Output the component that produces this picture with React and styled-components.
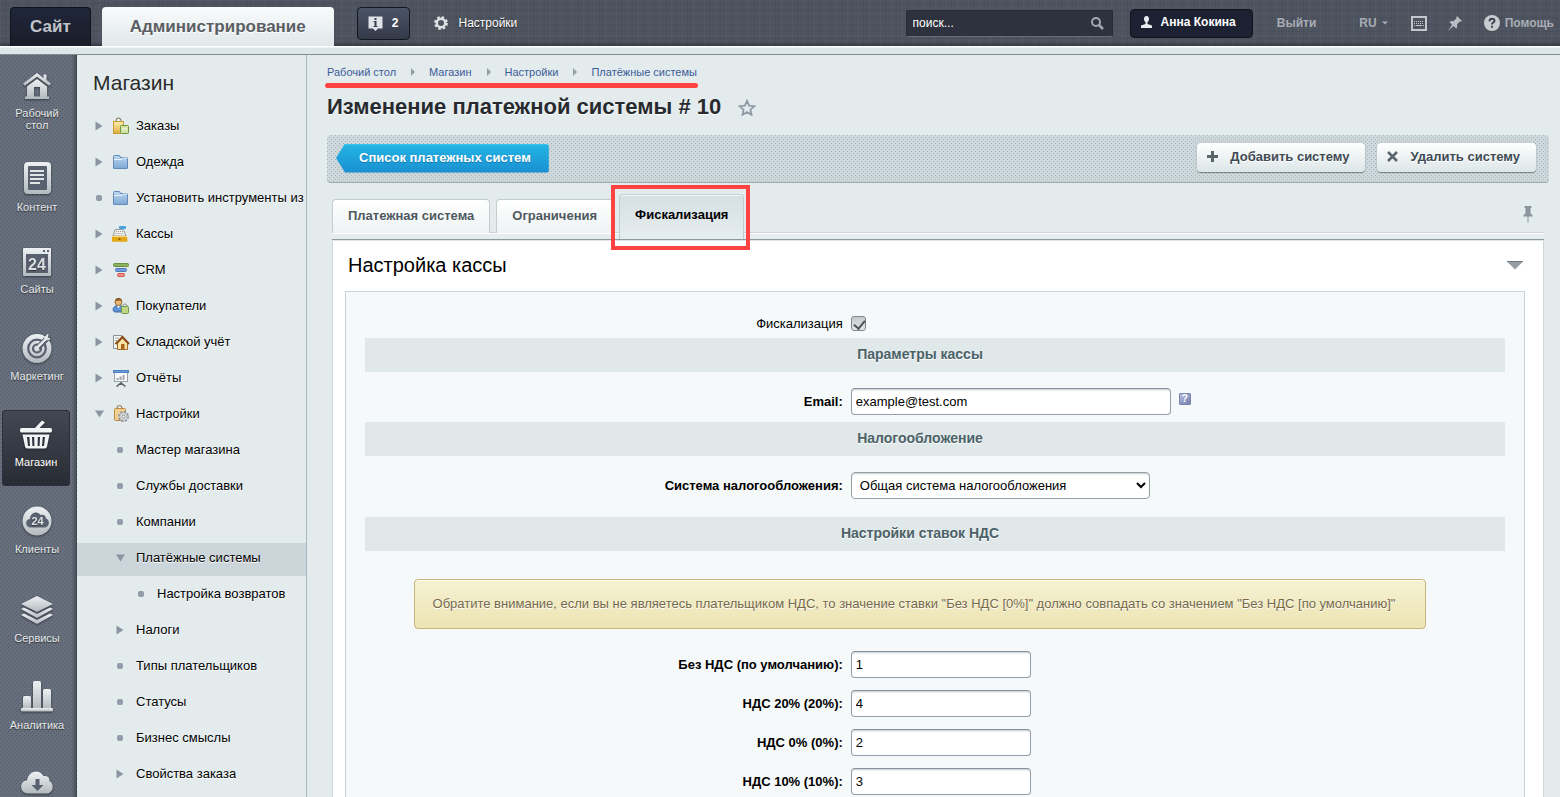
import React, { useState } from "react";
import styled, { createGlobalStyle, css } from "styled-components";

const GlobalStyle = createGlobalStyle`
	* {
		box-sizing: border-box;
	}
	body {
		margin: 0;
		background: #e3ebed;
		font-family: "Liberation Sans", Arial, sans-serif;
		font-size: 13px;
		color: #000;
	}
	button,
	input,
	select {
		font-family: inherit;
		font-size: 13px;
	}
	button {
		cursor: pointer;
	}
	a {
		color: inherit;
		text-decoration: none;
	}
	ul {
		list-style: none;
		margin: 0;
		padding: 0;
	}
`;

// staggered one-pixel dots over a plain colour
const dots = (dot, base) => `
	conic-gradient(at 1px 1px, transparent 75%, ${dot} 0) 0 0 / 4px 4px,
	conic-gradient(at 1px 1px, transparent 75%, ${dot} 0) 2px 2px / 4px 4px,
	${base}
`;

const Page = styled.div`
	display: flex;
	flex-direction: column;
	height: 100vh;
`;

/* header */

const Header = styled.header`
	flex: none;
	display: flex;
	align-items: center;
	height: 55px;
	padding: 0 6px 9px 10px;
	color: #fff;
	background:
		linear-gradient(#83898f, #83898f) bottom / 100% 1px no-repeat,
		linear-gradient(#fff 1px, #dde7e9 2px, #dde7e9) 0 46px / 100% 8px no-repeat,
		linear-gradient(rgba(30, 36, 44, 0), rgba(30, 36, 44, 0.5)) 0 41px / 100% 5px no-repeat,
		repeating-linear-gradient(90deg, rgba(255, 255, 255, 0.03) 0 1px, transparent 1px 5px, rgba(0, 0, 0, 0.05) 5px 6px, transparent 6px 11px),
		repeating-linear-gradient(rgba(255, 255, 255, 0.02) 0 1px, transparent 1px 3px, rgba(0, 0, 0, 0.05) 3px 4px, transparent 4px 7px),
		#4d545f;
`;

const HeaderTab = styled.a`
	align-self: flex-end;
	display: flex;
	align-items: center;
	height: 39px;
	font-size: 17px;
	font-weight: bold;
	border-radius: 4px 4px 0 0;
	${(props) =>
		props.$active
			? css`
					padding: 0 28px;
					margin-left: 11px;
					color: #5b5e63;
					background: linear-gradient(#f9fbfb, #dfe8ea);
					text-shadow: 0 1px 0 #fff;
			  `
			: css`
					padding: 0 19px;
					color: #c0c4cb;
					border: 1px solid #10131a;
					border-bottom: none;
					background: linear-gradient(#20263a, #191d29);
			  `}
`;

const NoticeButton = styled.button`
	display: flex;
	align-items: center;
	gap: 9px;
	height: 33px;
	margin-left: 23px;
	padding: 0 11px 0 10px;
	border: 1px solid #14171e;
	border-radius: 4px;
	background: linear-gradient(#4b5468, #343a49);
	color: #fff;
	font-size: 12px;
	font-weight: bold;
`;

const SettingsLink = styled.a`
	display: flex;
	align-items: center;
	gap: 10px;
	margin-left: 24px;
	font-size: 12px;
	text-shadow: 0 1px 1px #222;
`;

const Search = styled.form`
	display: flex;
	align-items: center;
	width: 207px;
	height: 27px;
	margin-left: auto;
	padding: 0 8px 0 6px;
	background: #2e323e;
	border: 1px solid #262a33;
	border-bottom-color: #666c78;
	border-radius: 2px;
`;

const SearchInput = styled.input`
	flex: 1;
	min-width: 0;
	padding: 0;
	border: none;
	outline: none;
	background: none;
	color: #fff;
	font-size: 12px;
	&::placeholder {
		color: #fff;
		opacity: 1;
	}
`;

const IconButton = styled.button`
	display: flex;
	padding: 0;
	border: none;
	background: none;
`;

const UserButton = styled.a`
	display: flex;
	align-items: center;
	gap: 9px;
	height: 29px;
	margin-left: 17px;
	padding: 0 16px 2px 10px;
	border: 1px solid #10131a;
	border-radius: 4px;
	background: linear-gradient(#1b2130, #1c2232);
	font-size: 12px;
	font-weight: bold;
`;

const HeaderLink = styled.a`
	display: flex;
	align-items: center;
	gap: 5px;
	margin-left: ${(props) => props.$gap}px;
	color: #a9adb5;
	font-size: 12px;
	font-weight: bold;
`;

/* left bar */

const Body = styled.div`
	flex: 1;
	min-height: 0;
	display: flex;
`;

const SideBar = styled.nav`
	flex: none;
	width: 77px;
	padding: 6px 0 0 2px;
	overflow: hidden;
	background:
		linear-gradient(90deg, transparent, rgba(30, 34, 42, 0.5)) right / 5px 100% no-repeat,
		${dots("#525967", "#676e7c")};
`;

const SideItem = styled.a`
	display: flex;
	flex-direction: column;
	align-items: center;
	width: 70px;
	padding-bottom: 17px;
	margin-bottom: 10px;
	color: #e4e9ec;
	font-size: 11px;
	line-height: 12px;
	text-align: center;
	text-shadow: 0 1px 1px #333;
	border-radius: 4px;
	${(props) =>
		props.$active &&
		css`
			width: 68px;
			color: #fff;
			background: linear-gradient(#434854, #282c34);
			box-shadow: inset 0 0 0 1px #2b2f38;
		`}
`;

const SideIcon = styled.span`
	display: flex;
	align-items: flex-end;
	height: ${(props) => props.$height}px;
	margin-bottom: 7px;
	filter: drop-shadow(0 1px 1px rgba(20, 24, 32, 0.6));
`;

const SideLabel = styled.span`
	max-width: 60px;
	padding-bottom: 1px;
`;

/* tree menu */

const Menu = styled.nav`
	flex: none;
	width: 230px;
	overflow: hidden;
	border-right: 1px solid #a3b6c4;
	background: #e3ebed;
`;

const MenuTitle = styled.h2`
	margin: 15px 0 15px 16px;
	font-size: 21px;
	line-height: 26px;
	font-weight: normal;
	color: #2b2b2b;
`;

const MenuRow = styled.li`
	display: flex;
	align-items: center;
	height: 33px;
	margin-bottom: 3px;
	padding: 0 0 4px ${(props) => 16 + props.$level * 21}px;
	background: ${(props) => (props.$selected ? "#cbd5da" : "none")};
`;

const Toggle = styled.button`
	flex: none;
	display: flex;
	align-items: center;
	justify-content: center;
	width: 12px;
	height: 12px;
	padding: 0;
	border: none;
	background: none;
`;

const Bullet = styled.span`
	flex: none;
	width: 6px;
	height: 6px;
	margin: 0 3px;
	border-radius: 2px;
	background: #929da9;
`;

const MenuLink = styled.a`
	display: flex;
	align-items: center;
	gap: 6px;
	min-width: 0;
	overflow: hidden;
	margin-left: ${(props) => (props.$icon ? 7 : 10)}px;
	white-space: nowrap;
	line-height: 20px;
	text-shadow: 0 1px 0 #fff;
	svg {
		flex: none;
	}
`;

/* content */

const Main = styled.main`
	flex: 1;
	min-width: 0;
	overflow: hidden;
	padding: 11px 11px 0 20px;
`;

const Breadcrumbs = styled.nav`
	position: relative;
	display: flex;
	align-items: center;
	width: fit-content;
	height: 13px;
	padding-bottom: 2px;
	color: #3d5c99;
	font-size: 11px;
	&::after {
		content: "";
		position: absolute;
		left: -2px;
		right: -1px;
		top: 17px;
		height: 5px;
		border-radius: 3px;
		background: #ff4343;
	}
`;

const CrumbArrow = styled.span`
	margin: 0 14px 0 15px;
	border-left: 4px solid #929da5;
	border-top: 4px solid transparent;
	border-bottom: 4px solid transparent;
`;

const TitleRow = styled.div`
	display: flex;
	align-items: center;
	gap: 17px;
	height: 28px;
	margin: 14px 0;
`;

const Title = styled.h1`
	margin: 0;
	font-size: 22px;
	color: #272b30;
	text-shadow: 0 1px 0 #fff;
`;

const Toolbar = styled.div`
	display: flex;
	align-items: center;
	gap: 12px;
	height: 48px;
	padding: 0 13px 1px 9px;
	border-radius: 4px;
	border-bottom: 1px solid #9fabae;
	background: ${dots("#aab7bd", "#cdd8dc")};
`;

const BackButton = styled.a`
	height: 29px;
	margin-right: auto;
	padding: 0 18px 0 23px;
	line-height: 28px;
	font-weight: bold;
	color: #fff;
	text-shadow: 0 1px 0 #1779ac;
	border-radius: 3px;
	background: linear-gradient(#3bc5ee 0, #23b2e2 2px, #1a92d3 27px, #1580bb);
	clip-path: polygon(0 50%, 9px 0, 100% 0, 100% 100%, 9px 100%);
`;

const ToolButton = styled.button`
	display: flex;
	align-items: center;
	gap: 12px;
	height: 29px;
	margin-bottom: 1px;
	padding: 0 16px 2px 10px;
	border: none;
	border-radius: 4px;
	background: linear-gradient(#fff, #dce6e8);
	box-shadow: 0 1px 1px #6f7c80, 0 0 1px #8d9a9f;
	color: #3f4b54;
	font-weight: bold;
	text-shadow: 0 1px 0 #fff;
`;

const Tabs = styled.div`
	display: flex;
	align-items: flex-end;
	gap: 6px;
	height: 57px;
	margin: 0 5px;
	padding-bottom: 6px;
	border-bottom: 1px solid #8d9a9c;
	background: linear-gradient(#c9d2d5 1px, #fff 1px, #fff 2px, #e6edf0 2px) 0 100% / 100% 7px no-repeat;
`;

const Tab = styled.button`
	height: 34px;
	padding: 0 15px 2px;
	border: 1px solid #c3cdd0;
	border-bottom: none;
	border-radius: 4px 4px 0 0;
	background: linear-gradient(#fff, #eef3f4);
	color: #4f5960;
	font-weight: bold;
	${(props) =>
		props.$active &&
		css`
			position: relative;
			height: 45px;
			margin-bottom: -6px;
			padding-bottom: 5px;
			background: linear-gradient(#d5dfe1, #e6edf0);
			box-shadow: inset 0 1px 0 #f4f8f8;
			color: #000;
			&::after {
				content: "";
				position: absolute;
				inset: -10px -7px -11px -9px;
				border: 4px solid #ff4343;
			}
		`}
`;

const PinButton = styled(IconButton)`
	margin: 0 11px 10px auto;
`;

const Panel = styled.section`
	min-height: 100vh;
	margin: 0 5px;
	padding: 0 18px 18px 12px;
	border: 1px solid #ced8db;
	border-top-color: #dfe6e8;
	background: #fff;
`;

const PanelHead = styled.div`
	display: flex;
	align-items: center;
	justify-content: space-between;
	height: 50px;
	padding: 0 2px 2px 3px;
`;

const PanelTitle = styled.h2`
	margin: 0;
	font-size: 20px;
	font-weight: normal;
`;

const Form = styled.form`
	padding: 19px;
	border: 1px solid #c8d4d8;
	background: #f5f9f9;
`;

const Band = styled.h3`
	display: flex;
	align-items: center;
	justify-content: center;
	height: 34px;
	margin: ${(props) => (props.$spaced ? 11 : 0)}px 0 11px;
	padding: 0 70px 2px 40px;
	background: #e0e8ea;
	color: #4b6267;
	font-size: 14px;
	text-shadow: 0 1px 0 #fff;
`;

const Row = styled.div`
	display: flex;
	align-items: center;
	padding: 5px 0 7px;
`;

const Label = styled.label`
	width: 42%;
	padding-right: 1px;
	text-align: right;
	font-weight: ${(props) => (props.$plain ? "normal" : "bold")};
`;

const Field = styled.div`
	flex: 1;
	display: flex;
	align-items: center;
	gap: 8px;
	padding-left: 7px;
`;

const TextInput = styled.input`
	width: ${(props) => (props.$wide ? 320 : 180)}px;
	height: 27px;
	padding: 0 4px;
	border: 1px solid #959ca8;
	border-top-color: #87919c;
	border-radius: 4px;
	background: #fff;
	box-shadow: inset 0 2px 2px -1px #c4cacf;
	color: #000;
`;

const Select = styled.select`
	width: 299px;
	height: 27px;
	padding: 0 4px;
	border: 1px solid #999ea3;
	border-radius: 4px;
	background-color: #fff;
	box-shadow: inset 0 2px 2px -1px #c4cacf;
	color: #000;
`;

const Checkbox = styled.input`
	appearance: none;
	position: relative;
	width: 15px;
	height: 15px;
	margin: 0;
	border: 1px solid #7f888e;
	border-radius: 3px;
	background: linear-gradient(#c5cacd, #e2e6e7);
	&:checked::after {
		content: "";
		position: absolute;
		left: 4px;
		top: 1px;
		width: 5px;
		height: 9px;
		border: solid #4d5357;
		border-width: 0 2px 2px 0;
		transform: rotate(40deg);
	}
`;

const HelpButton = styled.button`
	align-self: flex-start;
	width: 12px;
	height: 12px;
	margin-top: 5px;
	padding: 0;
	border: 1px solid #7985ad;
	border-radius: 1px;
	background: linear-gradient(135deg, #b4bddb, #7480b0);
	color: #fff;
	font-size: 10px;
	line-height: 10px;
	font-weight: bold;
`;

const Notice = styled.div`
	width: fit-content;
	margin: 28px auto 17px;
	padding: 16px 30px 16px 18px;
	border: 1px solid #c6b67a;
	border-radius: 4px;
	background: linear-gradient(#f5f2d4, #ede4b2);
	box-shadow: inset 0 1px 0 #fffef2;
	color: #75694a;
	line-height: 16px;
	text-shadow: 0 1px 0 #fff;
`;

const NoticeRow = styled.div`
	padding-right: 30px;
`;

/* icons */

const Gradients = () => (
	<svg width="0" height="0" style={{ position: "absolute" }} aria-hidden="true">
		<defs>
			<linearGradient id="silver" x1="0" y1="0" x2="0" y2="1">
				<stop offset="0" stopColor="#edf1f3" />
				<stop offset="1" stopColor="#b3babf" />
			</linearGradient>
			<linearGradient id="gold" x1="0" y1="0" x2="0" y2="1">
				<stop offset="0" stopColor="#fdeeb0" />
				<stop offset="1" stopColor="#dcae3a" />
			</linearGradient>
			<linearGradient id="blue" x1="0" y1="0" x2="0" y2="1">
				<stop offset="0" stopColor="#bcd8f1" />
				<stop offset="1" stopColor="#7ea8d3" />
			</linearGradient>
		</defs>
	</svg>
);

const HomeIcon = () => (
	<svg width="28" height="27" viewBox="0 0 28 27" fill="url(#silver)">
		<path d="M14 0L0 10.500l1.800 2.200L14 3.700l12.200 9 1.800-2.200-4.500-3.400V1.500h-3v3.400z" />
		<path d="M14 6L4 13.500V23.500H2V26h24v-2.500h-2V13.500zM11 14h6v9.500h-6z" fillRule="evenodd" />
	</svg>
);

const ContentIcon = () => (
	<svg width="27" height="32" viewBox="0 0 27 32">
		<rect width="27" height="32" rx="4" fill="url(#silver)" />
		<rect x="4" y="4" width="19" height="24" rx="1" fill="#596070" />
		<path d="M6 9h14M6 13h14M6 17h14M6 21h10" stroke="#dfe4e7" strokeWidth="2" />
	</svg>
);

const SitesIcon = () => (
	<svg width="28" height="28" viewBox="0 0 28 28">
		<rect width="28" height="28" rx="1" fill="url(#silver)" />
		<path d="M20 2h2v2h-2zM24 2h2v2h-2z" fill="#596070" />
		<rect x="3" y="6" width="22" height="19" fill="#596070" />
		<text x="14" y="22" textAnchor="middle" fontSize="16" fontWeight="bold" fill="#d9dee1">24</text>
	</svg>
);

const MarketingIcon = () => (
	<svg width="30" height="30" viewBox="0 0 30 30">
		<circle cx="15" cy="15.500" r="14.500" fill="url(#silver)" />
		<circle cx="15" cy="15.500" r="8.800" fill="none" stroke="#596070" strokeWidth="2.200" />
		<circle cx="15" cy="15.500" r="4" fill="none" stroke="#596070" strokeWidth="2.200" />
		<path d="M16 14.500L27 3.500" stroke="#596070" strokeWidth="5.500" />
		<path d="M14.500 16.500L24 7l4-1-2.500-1 .500-4-3 3-.5 2-8.500 8.500z" fill="#e3e8ea" stroke="#e3e8ea" />
	</svg>
);

const BasketIcon = () => (
	<svg width="32" height="29" viewBox="0 0 32 29" fill="#f1f4f5">
		<path d="M22 0.500l3 2L18.500 9H14z" />
		<rect x="0" y="8" width="32" height="4.500" rx="1.500" />
		<path d="M2.500 14.500h27l-2.500 12c-.3 1.300-1 2-2.200 2H7.200c-1.200 0-1.900-.7-2.200-2zM7 17l1 9h2l-.6-9zm5 0l.4 9h2l-.2-9zm5.800 0l-.2 9h2l.4-9zm4.900 0l-.7 9h2l1-9z" fillRule="evenodd" />
	</svg>
);

const ClientsIcon = () => (
	<svg width="30" height="30" viewBox="0 0 30 30">
		<circle cx="15" cy="15" r="14.500" fill="url(#silver)" />
		<path d="M9 21.500c-6 0-6.500-8-1-8.500C8 6 16 4.500 18.500 9c3-1 5.500.5 5.500 3.500 4.500 1.500 3.500 9-1.500 9z" fill="#596070" />
		<text x="15.500" y="19" textAnchor="middle" fontSize="11" fontWeight="bold" fill="#dfe4e7">24</text>
	</svg>
);

const ServicesIcon = () => (
	<svg width="34" height="29" viewBox="0 0 34 29" fill="url(#silver)">
		<path d="M17 0l16 8-16 8L1 8z" />
		<path d="M1 13l3-1.500 13 6.500 13-6.500 3 1.500-16 9z" />
		<path d="M1 19l3-1.500L17 24l13-6.500 3 1.500-16 9z" />
	</svg>
);

const AnalyticsIcon = () => (
	<svg width="32" height="31" viewBox="0 0 32 31" fill="url(#silver)">
		<rect x="2" y="15" width="8" height="13" rx="1.500" />
		<rect x="12" y="0" width="8" height="28" rx="1.500" />
		<rect x="22" y="8" width="8" height="20" rx="1.500" />
		<rect x="0" y="27" width="32" height="3.500" rx="1" />
	</svg>
);

const CloudIcon = () => (
	<svg width="32" height="23" viewBox="0 0 32 23">
		<path d="M7 22.500C-2.500 22.500-1.500 9 6 9.500 7 0 18-3 22.500 5c5-.5 6 2 6 5 5.500 3 3.500 12.500-3 12.500z" fill="url(#silver)" />
		<path d="M14.500 8h4v6h4L16.500 20l-6-6h4z" fill="#596070" />
	</svg>
);

const OrdersIcon = () => (
	<svg width="18" height="18" viewBox="0 0 18 18">
		<path d="M4 6V3.500a2 2 0 0 1 5 0V6" fill="none" stroke="#7c6c4a" />
		<rect x="1.500" y="4.500" width="10" height="12" fill="url(#gold)" stroke="#c79a35" />
		<path d="M10.500 10V8.500h3V10" fill="none" stroke="#7b9a4e" />
		<rect x="8.500" y="8.500" width="8" height="8" rx="1" fill="#d3e3a4" stroke="#6f9443" />
		<path d="M10 12h5" stroke="#f7fbea" />
	</svg>
);

const FolderIcon = () => (
	<svg width="18" height="18" viewBox="0 0 18 18">
		<path d="M1.500 15V3.500q0-1 1-1h5l1 2h6q1 0 1 1V15q0 .5-.5.5H2q-.5 0-.5-.5z" fill="url(#blue)" stroke="#6288b8" />
		<path d="M2 6.500h8l1-1.500h4" fill="none" stroke="#e6f1fb" />
	</svg>
);

const CashIcon = () => (
	<svg width="18" height="18" viewBox="0 0 18 18">
		<rect x="7" y="1" width="7" height="3" rx="1" fill="#4ba3e3" />
		<path d="M3 4.500h8.500L14 11H1z" fill="#f1f1ee" stroke="#9a9b98" />
		<path d="M4 6.500h7M3.500 8.500h8" stroke="#8f9496" strokeDasharray="1 1" />
		<path d="M0 11h15l.5 5q0 .8-1 .8H.5q-.5 0-.5-.8z" fill="#e2a616" />
		<path d="M0 11.500h15" stroke="#f9dd7e" />
		<circle cx="7.500" cy="14" r="1" fill="#8b5f06" />
	</svg>
);

const FunnelIcon = () => (
	<svg width="18" height="18" viewBox="0 0 18 18">
		<rect x="1.500" y="2.500" width="15" height="3" rx="1" fill="#8cb35b" stroke="#6a9142" />
		<rect x="3.500" y="7.500" width="11" height="3" rx="1" fill="#6f9ddd" stroke="#4a78bb" />
		<rect x="5.500" y="12.500" width="7" height="3" rx="1" fill="#f08e85" stroke="#d3564e" />
	</svg>
);

const BuyersIcon = () => (
	<svg width="18" height="18" viewBox="0 0 18 18">
		<path d="M1 13.500q0-5 5.500-5t5.500 5l-2 1.500H3z" fill="#5d92d6" stroke="#41699f" />
		<path d="M5 8.500l1.500 3 1.500-3z" fill="#fff" />
		<circle cx="6.500" cy="5" r="3.500" fill="#eab678" stroke="#9b6a32" />
		<path d="M3 4.500q1-4 3.500-3.500 3 0 3.500 3.500-2-2-7 0z" fill="#8a5726" />
		<path d="M11 9.500V8q2-2.500 4 0v1.500" fill="none" stroke="#8a8f86" />
		<rect x="9.500" y="9.500" width="7" height="7" rx="1" fill="#bcd682" stroke="#71964a" />
	</svg>
);

const StockIcon = () => (
	<svg width="18" height="18" viewBox="0 0 18 18">
		<path d="M1.500 2.500h8v13h-8z" fill="#f5f5f3" stroke="#8c9195" />
		<path d="M3 5h4M3 7.500h2M3 10h1" stroke="#a4a9ac" />
		<path d="M5.500 10v6.500h10V10l-5-5z" fill="#fbe2a4" stroke="#a26a26" />
		<path d="M3.500 11l7-7 6.500 7" fill="none" stroke="#8a4d19" strokeWidth="2" />
		<rect x="9" y="11" width="3.500" height="5.500" fill="#a8641f" />
	</svg>
);

const ReportsIcon = () => (
	<svg width="18" height="18" viewBox="0 0 18 18">
		<rect x="2.500" y="2.500" width="13" height="10" fill="#fafafa" stroke="#9aa0a4" />
		<rect x="1.500" y="1.500" width="15" height="2" fill="#6d9fde" stroke="#4f80c0" />
		<path d="M5.500 11V9M8.500 11V7.500M11.500 11V6" stroke="#a0a3a6" strokeWidth="2" />
		<path d="M9 13v3M4.500 17.500L9 14l4.500 3.500" fill="none" stroke="#5b5f63" strokeWidth="1.500" />
	</svg>
);

const ShopSettingsIcon = () => (
	<svg width="18" height="18" viewBox="0 0 18 18">
		<path d="M5 5V3a2 2 0 0 1 5 0v2" fill="none" stroke="#86724c" />
		<rect x="2.500" y="3.500" width="11" height="12" rx="1" fill="#f0cf92" stroke="#bd8b42" />
		<circle cx="11.500" cy="11.500" r="4.500" fill="#d8dbde" stroke="#85898d" strokeWidth="2" strokeDasharray="2 1.500" />
		<circle cx="11.500" cy="11.500" r="3.800" fill="#dde0e2" stroke="#b3b7ba" />
		<circle cx="11.500" cy="11.500" r="1.500" fill="#fff" stroke="#85898d" />
	</svg>
);

const ArrowRight = () => (
	<svg width="8" height="10" viewBox="0 0 8 10">
		<path d="M0.500 0.500v9L7.500 5z" fill="#8b96a3" />
	</svg>
);

const ArrowDown = () => (
	<svg width="9" height="8" viewBox="0 0 9 8">
		<path d="M0 0.500h9L4.500 7.500z" fill="#8b96a3" />
	</svg>
);

const InfoIcon = () => (
	<svg width="15" height="15" viewBox="0 0 15 15">
		<path d="M0.500 0.500h14v12H10L7.500 15 5 12.500H.5z" fill="#dfe4e8" />
		<path d="M6.500 2h2v2h-2zM5.500 5h3v5h1v1h-4v-1h1V6h-1z" fill="#3b4252" />
	</svg>
);

const GearIcon = () => (
	<svg width="14" height="14" viewBox="0 0 14 14">
		<circle cx="7" cy="7" r="5.700" fill="none" stroke="#e0e3e6" strokeWidth="2.400" strokeDasharray="2.500 1.977" />
		<circle cx="7" cy="7" r="4.200" fill="none" stroke="#e0e3e6" strokeWidth="2.400" />
	</svg>
);

const SearchIcon = () => (
	<svg width="13" height="13" viewBox="0 0 13 13" fill="none" stroke="#a3a7ae" strokeWidth="2">
		<circle cx="5" cy="5" r="4" />
		<path d="M8 8l4 4" strokeWidth="2.500" />
	</svg>
);

const UserIcon = () => (
	<svg width="11" height="12" viewBox="0 0 11 12">
		<path d="M5.500 0C3.500 0 3 1.500 3 3c0 1.500.7 2.500 1.500 3v2L0 9.500V12h11V9.500L6.500 8V6C7.300 5.500 8 4.500 8 3c0-1.500-.5-3-2.500-3z" fill="#e9ecee" />
	</svg>
);

const KeyboardIcon = () => (
	<svg width="16" height="15" viewBox="0 0 16 15">
		<path d="M1 1h14v13H1z" fill="none" stroke="#c3c8cc" strokeWidth="2" />
		<path d="M3 5.500h10M3 7.500h10" stroke="#c3c8cc" strokeDasharray="1 1" />
		<path d="M3 9.500h1M5 9.500h6M12 9.500h1" stroke="#c3c8cc" />
	</svg>
);

const TiltedPinIcon = () => (
	<svg width="14" height="15" viewBox="0 0 14 15">
		<path d="M9 0L14 5l-1.500.8-.8-.3-2.700 3c.5 1.700.2 3-.8 4L5.500 10 0 15l4-6.300L1.500 6c1-1 2.500-1.300 4-.8l3-2.900-.3-.9z" fill="#b9bec4" />
	</svg>
);

const HelpIcon = () => (
	<svg width="16" height="16" viewBox="0 0 16 16">
		<circle cx="8" cy="8" r="8" fill="#c9cdd1" />
		<path d="M5.500 6.200c0-3.400 5-3.200 5-.5C10.500 7.600 8 7.500 8 9.500M8 10.800v2" fill="none" stroke="#3d434e" strokeWidth="2" />
	</svg>
);

const StarIcon = () => (
	<svg width="18" height="17" viewBox="0 0 18 17">
		<path d="M9 1.800l2.100 4.900 5.200.5-3.900 3.500 1.100 5.100L9 13.100l-4.500 2.700 1.100-5.100L1.700 7.200l5.200-.5z" fill="none" stroke="#8e99a5" strokeWidth="1.800" />
	</svg>
);

const PlusIcon = () => (
	<svg width="11" height="11" viewBox="0 0 11 11">
		<path d="M5.500 0v11M0 5.500h11" stroke="#59646b" strokeWidth="3" />
	</svg>
);

const CrossIcon = () => (
	<svg width="11" height="11" viewBox="0 0 11 11">
		<path d="M1 1l9 9M10 1l-9 9" stroke="#59646b" strokeWidth="2.500" />
	</svg>
);

const PinIcon = () => (
	<svg width="10" height="17" viewBox="0 0 10 17">
		<path d="M1.500 0h7v2h-1v5.500L9.500 9v1.500H.500V9l2-1.500V2h-1z" fill="#8a949d" />
		<path d="M5 10v6.500" stroke="#8a949d" />
	</svg>
);

const CollapseIcon = () => (
	<svg width="16" height="9" viewBox="0 0 16 9">
		<path d="M0 0.500h16l-8 8z" fill="#979ea4" />
		<path d="M0 .5h16" stroke="#6f7a81" />
	</svg>
);

/* data */

const sections = [
	{ id: "desktop", label: "Рабочий стол", Icon: HomeIcon, height: 39 },
	{ id: "content", label: "Контент", Icon: ContentIcon, height: 35 },
	{ id: "sites", label: "Сайты", Icon: SitesIcon, height: 35 },
	{ id: "marketing", label: "Маркетинг", Icon: MarketingIcon, height: 40 },
	{ id: "shop", label: "Магазин", Icon: BasketIcon, height: 39, active: true },
	{ id: "clients", label: "Клиенты", Icon: ClientsIcon, height: 40 },
	{ id: "services", label: "Сервисы", Icon: ServicesIcon, height: 42 },
	{ id: "analytics", label: "Аналитика", Icon: AnalyticsIcon, height: 40 },
	{ id: "cloud", Icon: CloudIcon, height: 35 },
];

const menu = [
	{ label: "Заказы", Icon: OrdersIcon, level: 0, state: "closed" },
	{ label: "Одежда", Icon: FolderIcon, level: 0, state: "closed" },
	{ label: "Установить инструменты из", Icon: FolderIcon, level: 0 },
	{ label: "Кассы", Icon: CashIcon, level: 0, state: "closed" },
	{ label: "CRM", Icon: FunnelIcon, level: 0, state: "closed" },
	{ label: "Покупатели", Icon: BuyersIcon, level: 0, state: "closed" },
	{ label: "Складской учёт", Icon: StockIcon, level: 0, state: "closed" },
	{ label: "Отчёты", Icon: ReportsIcon, level: 0, state: "closed" },
	{ label: "Настройки", Icon: ShopSettingsIcon, level: 0, state: "open" },
	{ label: "Мастер магазина", level: 1 },
	{ label: "Службы доставки", level: 1 },
	{ label: "Компании", level: 1 },
	{ label: "Платёжные системы", level: 1, state: "open", selected: true },
	{ label: "Настройка возвратов", level: 2 },
	{ label: "Налоги", level: 1, state: "closed" },
	{ label: "Типы плательщиков", level: 1 },
	{ label: "Статусы", level: 1 },
	{ label: "Бизнес смыслы", level: 1 },
	{ label: "Свойства заказа", level: 1, state: "closed" },
];

const crumbs = ["Рабочий стол", "Магазин", "Настройки", "Платёжные системы"];

const tabs = ["Платежная система", "Ограничения", "Фискализация"];

const rates = [
	{ id: "vat-none", label: "Без НДС (по умолчанию):", value: "1" },
	{ id: "vat-20", label: "НДС 20% (20%):", value: "4" },
	{ id: "vat-0", label: "НДС 0% (0%):", value: "2" },
	{ id: "vat-10", label: "НДС 10% (10%):", value: "3" },
];

const App = () => {
	const [activeTab, setActiveTab] = useState(2);

	return (
		<Page>
			<GlobalStyle />
			<Gradients />
			<Header>
				<HeaderTab href="#site">Сайт</HeaderTab>
				<HeaderTab href="#admin" $active>Администрирование</HeaderTab>
				<NoticeButton>
					<InfoIcon />2
				</NoticeButton>
				<SettingsLink href="#settings">
					<GearIcon />
					Настройки
				</SettingsLink>
				<Search>
					<SearchInput placeholder="поиск..." aria-label="поиск" />
					<IconButton type="button" aria-label="Найти">
						<SearchIcon />
					</IconButton>
				</Search>
				<UserButton href="#user">
					<UserIcon />
					Анна Кокина
				</UserButton>
				<HeaderLink href="#logout" $gap={24}>Выйти</HeaderLink>
				<HeaderLink href="#lang" $gap={43}>
					RU
					<svg width="6" height="4" viewBox="0 0 6 4">
						<path d="M0 0.500h6l-3 3z" fill="#a9adb5" />
					</svg>
				</HeaderLink>
				<HeaderLink href="#keys" $gap={23} aria-label="Горячие клавиши">
					<KeyboardIcon />
				</HeaderLink>
				<HeaderLink href="#pin" $gap={21} aria-label="Закрепить панель">
					<TiltedPinIcon />
				</HeaderLink>
				<HeaderLink href="#help" $gap={22}>
					<HelpIcon />
					Помощь
				</HeaderLink>
			</Header>
			<Body>
				<SideBar>
					{sections.map(({ id, label, Icon, height, active }) => (
						<SideItem href={`#${id}`} key={id} $active={active}>
							<SideIcon $height={height}>
								<Icon />
							</SideIcon>
							{label && <SideLabel>{label}</SideLabel>}
						</SideItem>
					))}
				</SideBar>
				<Menu>
					<MenuTitle>Магазин</MenuTitle>
					<ul>
						{menu.map(({ label, Icon, level, state, selected }) => (
							<MenuRow key={label} $level={level} $selected={selected}>
								{state ? (
									<Toggle aria-label={label} aria-expanded={state === "open"}>
										{state === "open" ? <ArrowDown /> : <ArrowRight />}
									</Toggle>
								) : (
									<Bullet />
								)}
								<MenuLink href="#item" $icon={Boolean(Icon)}>
									{Icon && <Icon />}
									{label}
								</MenuLink>
							</MenuRow>
						))}
					</ul>
				</Menu>
				<Main>
					<Breadcrumbs>
						{crumbs.map((c, i) => (
							<React.Fragment key={c}>
								{i > 0 && <CrumbArrow />}
								<a href="#crumb">{c}</a>
							</React.Fragment>
						))}
					</Breadcrumbs>
					<TitleRow>
						<Title>Изменение платежной системы # 10</Title>
						<IconButton aria-label="В избранное">
							<StarIcon />
						</IconButton>
					</TitleRow>
					<Toolbar>
						<BackButton href="#list">Список платежных систем</BackButton>
						<ToolButton>
							<PlusIcon />
							Добавить систему
						</ToolButton>
						<ToolButton>
							<CrossIcon />
							Удалить систему
						</ToolButton>
					</Toolbar>
					<Tabs role="tablist">
						{tabs.map((t, i) => (
							<Tab
								key={t}
								role="tab"
								aria-selected={i === activeTab}
								$active={i === activeTab}
								onClick={() => setActiveTab(i)}
							>
								{t}
							</Tab>
						))}
						<PinButton aria-label="Закрепить">
							<PinIcon />
						</PinButton>
					</Tabs>
					<Panel>
						<PanelHead>
							<PanelTitle>Настройка кассы</PanelTitle>
							<IconButton aria-label="Свернуть">
								<CollapseIcon />
							</IconButton>
						</PanelHead>
						<Form>
							<Row>
								<Label htmlFor="fiscal" $plain>Фискализация</Label>
								<Field>
									<Checkbox type="checkbox" id="fiscal" defaultChecked />
								</Field>
							</Row>
							<Band>Параметры кассы</Band>
							<Row>
								<Label htmlFor="email">Email:</Label>
								<Field>
									<TextInput id="email" defaultValue="example@test.com" $wide />
									<HelpButton type="button">?</HelpButton>
								</Field>
							</Row>
							<Band>Налогообложение</Band>
							<Row>
								<Label htmlFor="tax">Система налогообложения:</Label>
								<Field>
									<Select id="tax">
										<option>Общая система налогообложения</option>
									</Select>
								</Field>
							</Row>
							<Band $spaced>Настройки ставок НДС</Band>
							<NoticeRow>
								<Notice>
									Обратите внимание, если вы не являетесь плательщиком НДС, то значение ставки "Без НДС [0%]" должно
									совпадать со значением "Без НДС [по умолчанию]"
								</Notice>
							</NoticeRow>
							{rates.map((r) => (
								<Row key={r.id}>
									<Label htmlFor={r.id}>{r.label}</Label>
									<Field>
										<TextInput id={r.id} defaultValue={r.value} />
									</Field>
								</Row>
							))}
						</Form>
					</Panel>
				</Main>
			</Body>
		</Page>
	);
};

export default App;
